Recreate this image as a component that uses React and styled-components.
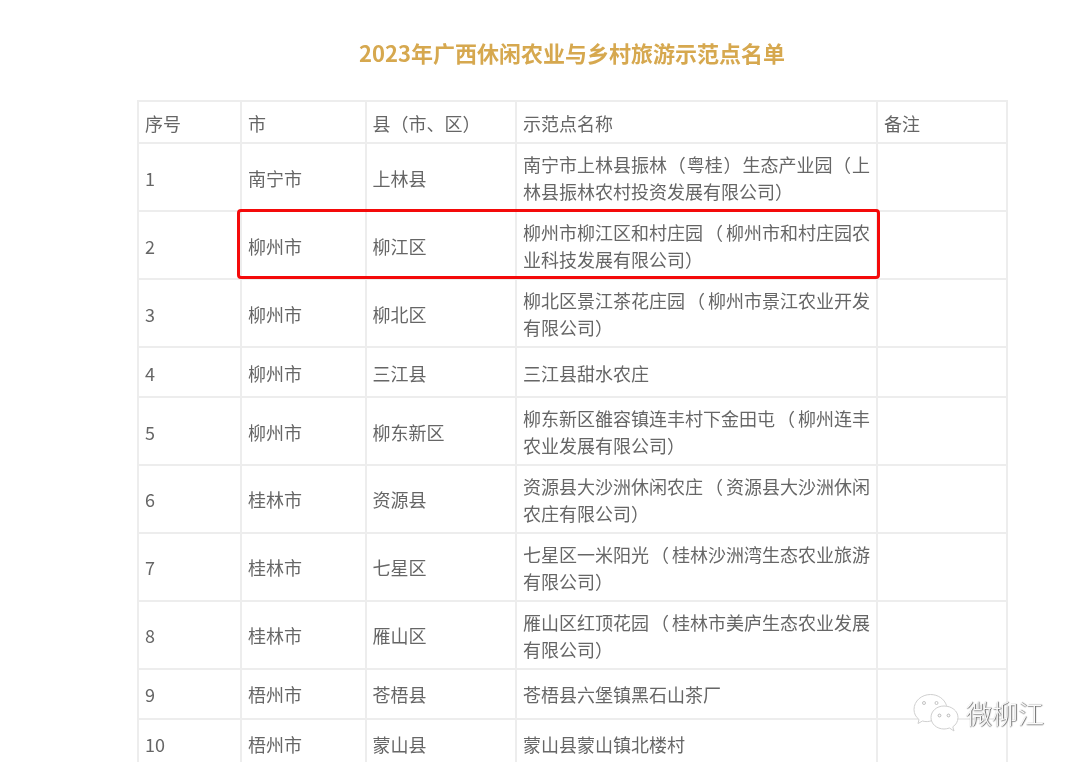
import React from "react";
import styled, { createGlobalStyle } from "styled-components";

const Global = createGlobalStyle`
  html, body { margin: 0; padding: 0; background: #fff; }
  body { height: 762px; overflow: hidden; font-family: "Noto Sans CJK SC", "Liberation Sans", sans-serif; }
`;

const Page = styled.div`
  position: relative;
  width: 1080px;
  height: 762px;
  overflow: hidden;
  background: #fff;
`;

const Blurred = styled.div`
  filter: blur(0.4px);
  padding: 36px 73px 0 137px;
`;

const Title = styled.h1`
  margin: 0 0 32px;
  height: 32px;
  line-height: 32px;
  font-size: 22px;
  font-weight: 700;
  color: #d6a84f;
  text-align: center;
  white-space: nowrap;
`;

const Table = styled.table`
  width: 870px;
  border-collapse: collapse;
  table-layout: fixed;
`;

const Row = styled.tr`
  height: ${(p) => p.$h}px;
`;

const Cell = styled.td`
  border: 2px solid #ededed;
  padding: 2px 5px 0 6px;
  font-size: 18px;
  line-height: 27px;
  font-weight: 400;
  color: #666;
  vertical-align: middle;
  word-break: break-all;
  text-spacing-trim: space-all;
`;

const Paren = styled.span`
  padding-left: ${(p) => p.$extra * 0.4}px;
  letter-spacing: ${(p) => p.$extra * 0.6}px;
`;

const Highlight = styled.div`
  position: absolute;
  left: 237px;
  top: 209px;
  width: 643px;
  height: 70px;
  box-sizing: border-box;
  border: 3px solid #f40a0a;
  border-radius: 4px;
`;

const Watermark = styled.div`
  position: absolute;
  left: 913px;
  top: 692px;
  display: flex;
  align-items: center;
  gap: 7px;
  filter: blur(0.3px);
`;

const MarkText = styled.span`
  font-size: 26px;
  line-height: 42px;
  font-weight: 300;
  color: #fafafa;
  text-shadow: 1px 0 1px #666, 0 1px 1px #999;
`;

const WeChatIcon = () => (
  <svg width="46" height="40" viewBox="0 0 46 40" fill="#fff" stroke="#cfcfcf" strokeWidth="1">
    <path d="M6 26.500 C2.800 24 1 20.500 1 16.500 C1 8 8.500 1.500 17.500 1.500 C25 1.500 31.500 6 33.500 12.500 L33.500 26 L19 27.500 C16 28.800 12.500 29 9.500 28 L5 30.500 Z" />
    <path d="M41 38 L36.500 35 C34.500 35.700 32.800 36 31 36 C23.800 36 18 31 18 24.500 C18 18 23.800 13 31 13 C38.800 13 45 18 45 24.500 C45 28.500 43 31.800 39.800 33.800 Z" />
    <circle cx="11" cy="10" r="1.500" fill="#fff" stroke="#c4c4c4" />
    <circle cx="23.500" cy="10" r="1.500" fill="#fff" stroke="#c4c4c4" />
    <circle cx="26.500" cy="22.500" r="1.400" fill="#fff" stroke="#b8b8b8" />
    <circle cx="35.500" cy="22.500" r="1.400" fill="#fff" stroke="#b8b8b8" />
  </svg>
);

const widths = [103, 124.500, 150.500, 361, 129.500];

const rows = [
  { h: 42, cells: ["序号", "市", "县（市、区）", "示范点名称", "备注"] },
  { h: 68, extra: 1.7, cells: ["1", "南宁市", "上林县", "南宁市上林县振林（粤桂）生态产业园（上林县振林农村投资发展有限公司）", ""] },
  { h: 68, extra: 5, cells: ["2", "柳州市", "柳江区", "柳州市柳江区和村庄园（柳州市和村庄园农业科技发展有限公司）", ""] },
  { h: 68, extra: 5, cells: ["3", "柳州市", "柳北区", "柳北区景江茶花庄园（柳州市景江农业开发有限公司）", ""] },
  { h: 50, cells: ["4", "柳州市", "三江县", "三江县甜水农庄", ""] },
  { h: 68, extra: 5, cells: ["5", "柳州市", "柳东新区", "柳东新区雒容镇连丰村下金田屯（柳州连丰农业发展有限公司）", ""] },
  { h: 67.500, extra: 5, cells: ["6", "桂林市", "资源县", "资源县大沙洲休闲农庄（资源县大沙洲休闲农庄有限公司）", ""] },
  { h: 68, extra: 5, cells: ["7", "桂林市", "七星区", "七星区一米阳光（桂林沙洲湾生态农业旅游有限公司）", ""] },
  { h: 68, extra: 5, cells: ["8", "桂林市", "雁山区", "雁山区红顶花园（桂林市美庐生态农业发展有限公司）", ""] },
  { h: 50, cells: ["9", "梧州市", "苍梧县", "苍梧县六堡镇黑石山茶厂", ""] },
  { h: 50, cells: ["10", "梧州市", "蒙山县", "蒙山县蒙山镇北楼村", ""] },
];

// The source justifies wrapped first lines by widening only their brackets.
const renderName = (text, extra) => {
  if (!extra) return text;
  const first = text.slice(0, 19);
  const rest = text.slice(19);
  const parts = first.split(/([（）])/).filter(Boolean);
  return (
    <>
      {parts.map((part, i) =>
        part === "（" || part === "）" ? (
          <Paren key={i} $extra={extra}>{part}</Paren>
        ) : (
          part
        )
      )}
      {rest}
    </>
  );
};

export default function App() {
  return (
    <Page>
      <Global />
      <Blurred>
        <Title>2023年广西休闲农业与乡村旅游示范点名单</Title>
        <Table>
          <colgroup>
            {widths.map((w, i) => (
              <col key={i} style={{ width: w }} />
            ))}
          </colgroup>
          <tbody>
            {rows.map(({ h, extra, cells }, r) => (
              <Row key={r} $h={h}>
                {cells.map((c, i) => (
                  <Cell key={i}>{i === 3 ? renderName(c, extra) : c}</Cell>
                ))}
              </Row>
            ))}
          </tbody>
        </Table>
      </Blurred>
      <Highlight />
      <Watermark>
        <WeChatIcon />
        <MarkText>微柳江</MarkText>
      </Watermark>
    </Page>
  );
}
